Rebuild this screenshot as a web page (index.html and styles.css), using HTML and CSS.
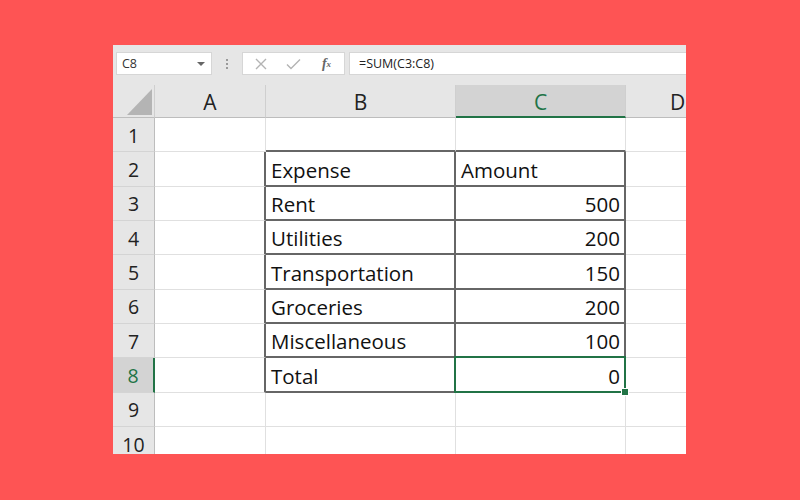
FILE: index.html
```html
<!DOCTYPE html>
<html>
<head>
<meta charset="utf-8">
<link rel="stylesheet" href="styles.css">
</head>
<body>
<div class="card">
  <div class="toolbar">
    <div class="namebox"><span>C8</span><span class="dd"></span></div>
    <div class="dots"><i></i><i></i><i></i></div>
    <div class="fbtns">
      <span class="fbtn"><svg width="12" height="12" viewBox="0 0 12 12"><path d="M1 1L11 11M11 1L1 11" stroke="#b3b3b3" stroke-width="1.4" fill="none"/></svg></span>
      <span class="fbtn"><svg width="15" height="12" viewBox="0 0 15 12"><path d="M1 6.5L5 10.5L14 1.5" stroke="#b3b3b3" stroke-width="1.4" fill="none"/></svg></span>
      <span class="fbtn fx">f<sub>x</sub></span>
    </div>
    <div class="formula">=SUM(C3:C8)</div>
  </div>
  <div class="sheet">
    <div class="corner"><span class="tri"></span></div>
    <div class="ch">A</div>
    <div class="ch">B</div>
    <div class="ch sel">C</div>
    <div class="ch last">D</div>

    <div class="rh">1</div>
    <div class="c"></div><div class="c tb"></div><div class="c tb"></div><div class="c last"></div>

    <div class="rh">2</div>
    <div class="c tr"></div><div class="c t">Expense</div><div class="c t">Amount</div><div class="c last"></div>

    <div class="rh">3</div>
    <div class="c tr"></div><div class="c t">Rent</div><div class="c t num">500</div><div class="c last"></div>

    <div class="rh">4</div>
    <div class="c tr"></div><div class="c t">Utilities</div><div class="c t num">200</div><div class="c last"></div>

    <div class="rh">5</div>
    <div class="c tr"></div><div class="c t">Transportation</div><div class="c t num">150</div><div class="c last"></div>

    <div class="rh">6</div>
    <div class="c tr"></div><div class="c t">Groceries</div><div class="c t num">200</div><div class="c last"></div>

    <div class="rh">7</div>
    <div class="c tr"></div><div class="c t">Miscellaneous</div><div class="c t num">100</div><div class="c last"></div>

    <div class="rh sel">8</div>
    <div class="c tr"></div><div class="c t">Total</div><div class="c t num active">0</div><div class="c last"></div>

    <div class="rh">9</div>
    <div class="c"></div><div class="c"></div><div class="c"></div><div class="c last"></div>

    <div class="rh">10</div>
    <div class="c"></div><div class="c"></div><div class="c"></div><div class="c last"></div>
  </div>
</div>
</body>
</html>
```

FILE: styles.css
```css
html, body {
  margin: 0;
  padding: 0;
}
body {
  width: 800px;
  height: 500px;
  background: #fe5454;
  font-family: "Open Sans", "Noto Sans", sans-serif;
  overflow: hidden;
}
.card {
  margin: 45px 0 0 113px;
  width: 573px;
  height: 409px;
  background: #ffffff;
  overflow: hidden;
}
.toolbar {
  height: 40px;
  box-sizing: border-box;
  background: #e6e6e6;
  display: flex;
  align-items: flex-start;
  padding: 7px 0 0 3px;
}
.namebox {
  width: 96px;
  height: 23px;
  box-sizing: border-box;
  background: #fff;
  border: 1px solid #d6d6d6;
  display: flex;
  align-items: center;
  justify-content: space-between;
  padding: 0 6px 0 5px;
  font-size: 12.5px;
  color: #333;
}
.dd {
  width: 0;
  height: 0;
  border-left: 4px solid transparent;
  border-right: 4px solid transparent;
  border-top: 4px solid #666;
}
.dots {
  width: 30px;
  height: 23px;
  display: flex;
  flex-direction: column;
  align-items: center;
  justify-content: center;
  gap: 2px;
}
.dots i {
  width: 2px;
  height: 2px;
  background: #9a9a9a;
}
.fbtns {
  width: 103px;
  height: 23px;
  box-sizing: border-box;
  background: #fff;
  border: 1px solid #d6d6d6;
  display: flex;
  align-items: center;
  padding-left: 1px;
}
.fbtn {
  width: 33px;
  height: 21px;
  display: flex;
  align-items: center;
  justify-content: center;
}
.fx {
  font-family: "Liberation Serif", serif;
  font-style: italic;
  font-weight: bold;
  font-size: 14px;
  color: #666;
}
.fx sub {
  font-size: 9px;
  vertical-align: -1px;
}
.formula {
  flex: 1;
  height: 23px;
  box-sizing: border-box;
  margin-left: 4px;
  background: #fff;
  border: 1px solid #d6d6d6;
  border-right: none;
  display: flex;
  align-items: center;
  padding-left: 9px;
  font-size: 12.5px;
  color: #222;
}
.sheet {
  display: grid;
  grid-template-columns: 42px 111px 190px 170px 60px;
  grid-template-rows: 33px repeat(10, 34.35px);
}
.sheet > div {
  box-sizing: border-box;
  border-right: 1px solid #e0e0e0;
  border-bottom: 1px solid #e0e0e0;
}
.corner {
  background: #e6e6e6;
  display: flex;
  align-items: flex-end;
  justify-content: flex-end;
  padding: 0 2px 2px 0;
}
.sheet > .corner, .sheet > .ch {
  border-bottom: 1px solid #bdbdbd;
  border-right: 1px solid #cfcfcf;
}
.tri {
  width: 25px;
  height: 26px;
  background: #b4b4b4;
  clip-path: polygon(100% 0, 100% 100%, 0 100%);
}
.ch {
  background: #e6e6e6;
  display: flex;
  align-items: center;
  justify-content: center;
  font-size: 21px;
  color: #222;
  padding-top: 2px;
}
.sheet > .ch.sel {
  background: #d3d3d3;
  color: #217346;
  border-bottom: 2px solid #217346;
}
.sheet > .ch.last {
  border-right: none;
  justify-content: flex-start;
  padding-left: 44px;
}
.sheet > .rh {
  background: #e6e6e6;
  display: flex;
  align-items: center;
  justify-content: center;
  font-size: 19.5px;
  color: #222;
  border-right: 1px solid #bdbdbd;
  border-bottom: 1px solid #d4d4d4;
  padding-top: 1px;
}
.sheet > .rh.sel {
  background: #d3d3d3;
  color: #217346;
  border-right: 2px solid #217346;
}
.c {
  display: flex;
  align-items: center;
  font-size: 20.5px;
  color: #111;
  padding: 2px 4px 0 5px;
  white-space: nowrap;
}
.sheet > .c.last {
  border-right: none;
}
.sheet > .c.tb {
  border-bottom: 2px solid #666;
}
.sheet > .c.tr {
  border-right: 2px solid #666;
}
.sheet > .c.t {
  border-right: 2px solid #666;
  border-bottom: 2px solid #666;
}
.num {
  justify-content: flex-end;
}
.active {
  position: relative;
}
.active::after {
  content: "";
  position: absolute;
  left: -2px;
  top: -2px;
  right: -2px;
  bottom: -2px;
  border: 2px solid #217346;
}
.active::before {
  content: "";
  position: absolute;
  right: -5px;
  bottom: -5px;
  width: 6px;
  height: 6px;
  background: #217346;
  border: 1px solid #fff;
  z-index: 1;
}
```
